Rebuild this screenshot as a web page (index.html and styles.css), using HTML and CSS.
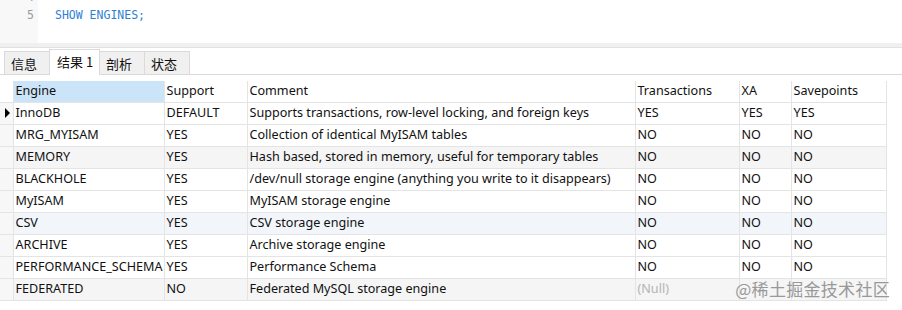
FILE: index.html
```html
<!DOCTYPE html>
<html>
<head>
<meta charset="utf-8">
<link rel="stylesheet" href="styles.css">
</head>
<body>
<div class="editor">
  <div class="gutter">
    <div class="ln ln-cut">4</div>
    <div class="ln">5</div>
  </div>
  <div class="code">
    <div class="line line-cut">&nbsp;</div>
    <div class="line sql">SHOW ENGINES;</div>
  </div>
</div>
<div class="splitter"></div>
<div class="tabs">
  <div class="tab">信息</div>
  <div class="tab active">结果 1</div>
  <div class="tab">剖析</div>
  <div class="tab">状态</div>
</div>
<div class="grid-wrap">
  <table class="grid">
    <colgroup>
      <col class="c-ind"><col class="c-eng"><col class="c-sup"><col class="c-com"><col class="c-tra"><col class="c-xa"><col class="c-sav">
    </colgroup>
    <thead>
      <tr><th class="ind"></th><th class="sel">Engine</th><th>Support</th><th>Comment</th><th>Transactions</th><th>XA</th><th>Savepoints</th></tr>
    </thead>
    <tbody>
      <tr><td class="ind"><span class="arrow"></span></td><td>InnoDB</td><td>DEFAULT</td><td>Supports transactions, row-level locking, and foreign keys</td><td>YES</td><td>YES</td><td>YES</td></tr>
      <tr><td class="ind"></td><td>MRG_MYISAM</td><td>YES</td><td>Collection of identical MyISAM tables</td><td>NO</td><td>NO</td><td>NO</td></tr>
      <tr class="gray"><td class="ind"></td><td>MEMORY</td><td>YES</td><td>Hash based, stored in memory, useful for temporary tables</td><td>NO</td><td>NO</td><td>NO</td></tr>
      <tr><td class="ind"></td><td>BLACKHOLE</td><td>YES</td><td>/dev/null storage engine (anything you write to it disappears)</td><td>NO</td><td>NO</td><td>NO</td></tr>
      <tr><td class="ind"></td><td>MyISAM</td><td>YES</td><td>MyISAM storage engine</td><td>NO</td><td>NO</td><td>NO</td></tr>
      <tr class="blue"><td class="ind"></td><td>CSV</td><td>YES</td><td>CSV storage engine</td><td>NO</td><td>NO</td><td>NO</td></tr>
      <tr><td class="ind"></td><td>ARCHIVE</td><td>YES</td><td>Archive storage engine</td><td>NO</td><td>NO</td><td>NO</td></tr>
      <tr><td class="ind"></td><td>PERFORMANCE_SCHEMA</td><td>YES</td><td>Performance Schema</td><td>NO</td><td>NO</td><td>NO</td></tr>
      <tr class="gray"><td class="ind"></td><td>FEDERATED</td><td>NO</td><td>Federated MySQL storage engine</td><td class="null">(Null)</td><td></td><td></td></tr>
    </tbody>
  </table>
  <div class="watermark">@稀土掘金技术社区</div>
</div>
</body>
</html>
```
FILE: styles.css
```css
* { box-sizing: border-box; }
html, body { margin: 0; padding: 0; background: #ffffff; }
body {
  width: 902px;
  height: 310px;
  overflow: hidden;
  font-family: "Noto Sans", "Noto Sans CJK SC", sans-serif;
  font-size: 12.6px;
  color: #111111;
}
.editor {
  display: flex;
  height: 43px;
  overflow: hidden;
  background: #ffffff;
}
.gutter {
  width: 38px;
  background: #f8f8f8;
  padding-right: 4px;
}
.ln {
  height: 18px;
  text-align: right;
  color: #9a9a9a;
  font-family: "DejaVu Sans Mono", monospace;
  font-size: 11.5px;
  line-height: 18px;
}
.ln-cut, .line-cut { margin-top: -12px; }
.code { padding-left: 17px; }
.line {
  height: 18px;
  line-height: 18px;
  font-family: "DejaVu Sans Mono", monospace;
  font-size: 11.5px;
}
.sql { color: #2f7fd4; }
.splitter {
  height: 5px;
  background: #f0f0f0;
  border-bottom: 1px solid #e2e2e2;
}
.tabs {
  display: flex;
  align-items: flex-end;
  height: 27px;
  background: #ffffff;
  padding-left: 4px;
  border-bottom: 1px solid #d9d9d9;
}
.tab {
  height: 23px;
  line-height: 23px;
  padding: 0 0 0 6px;
  width: 46px;
  background: #f0f0f0;
  border: 1px solid #dadada;
  border-bottom: none;
  margin-right: -1px;
  color: #111111;
  font-family: "Noto Sans CJK SC", sans-serif;
  font-size: 13px;
}
.tab.active {
  height: 26px;
  width: 51px;
  line-height: 24px;
  background: #ffffff;
  margin-bottom: -1px;
  padding-left: 7px;
}
.grid-wrap {
  position: relative;
  padding-top: 6px;
}
.grid {
  border-collapse: collapse;
  table-layout: fixed;
  width: 886px;
}
.c-ind { width: 13px; }
.c-eng { width: 151px; }
.c-sup { width: 83px; }
.c-com { width: 388px; }
.c-tra { width: 104px; }
.c-xa { width: 52px; }
.c-sav { width: 95px; }
.grid th, .grid td {
  height: 22px;
  padding: 0 0 0 2px;
  border: 1px solid #e4e4e4;
  text-align: left;
  font-weight: normal;
  white-space: nowrap;
  overflow: hidden;
  line-height: 20px;
  color: #111111;
}
.grid th { height: 21px; border-top: none; }
.grid th.sel { background: #cce4f7; }
.grid .ind {
  background: #f7f7f7;
  padding: 0;
  border-left: none;
}
.grid th.ind { background: #ffffff; }
.arrow {
  display: block;
  width: 0;
  height: 0;
  margin-left: 5px;
  border-top: 5px solid transparent;
  border-bottom: 5px solid transparent;
  border-left: 5px solid #000000;
}
tr.gray td { background: #f5f5f5; }
tr.blue td { background: #f2f6fb; }
tr.gray td.ind, tr.blue td.ind { background: #f7f7f7; }
td.null { color: #b4b4b4; }
.watermark {
  position: absolute;
  right: 12px;
  top: 201px;
  color: #999999;
  font-family: "Noto Sans CJK SC", sans-serif;
  font-size: 17px;
  letter-spacing: 0.3px;
}
```
